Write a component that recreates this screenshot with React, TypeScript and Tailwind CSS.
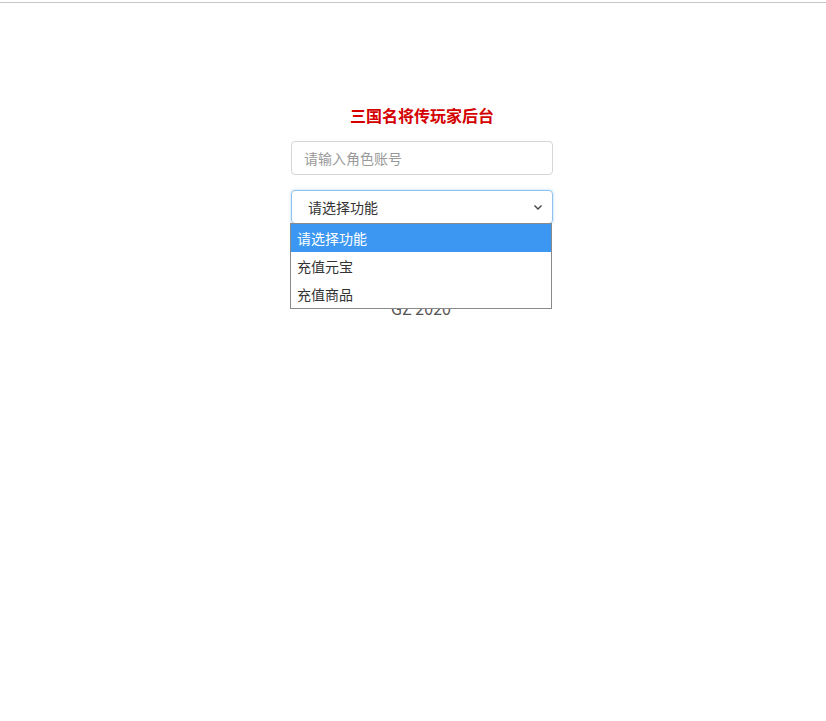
import React from "react";

export default function App() {
  const font = { fontFamily: '"Microsoft YaHei", "Noto Sans CJK SC", "Liberation Sans", sans-serif' };
  return (
    <div className="w-[826px] h-[721px] bg-white relative" style={font}>
      <div className="pt-[2px]">
        <div className="h-px bg-[#c8c8c8]" />
      </div>
      <div className="flex flex-col items-center pt-[100px] pl-[18px]">
        <div className="text-[16px] font-bold text-[#d40000] leading-[24px]">三国名将传玩家后台</div>
        <div className="mt-[14px] w-[262px] h-[34px] border border-[#d6d6d6] rounded-[4px] flex items-center pl-[12px] text-[14px] text-[#9a9a9a]">
          请输入角色账号
        </div>
        <div className="relative mt-[15px] w-[262px]">
          <div className="h-[34px] border border-[#8fc2f0] rounded-[4px] flex items-center pl-[16px] pr-[8px] text-[14px] text-[#333] shadow-[0_0_3px_rgba(102,175,233,0.5)]">
            <span className="flex-1">请选择功能</span>
            <svg width="10" height="10" viewBox="0 0 10 10" className="mr-[1px]">
              <path d="M1.5 3.5 L5 7 L8.5 3.5" fill="none" stroke="#444" strokeWidth="1.4" />
            </svg>
          </div>
          <div className="mt-[74px] text-center text-[16px] text-[#555] leading-[20px] pr-[2px]">GZ 2020</div>
          <div className="absolute left-[-1px] top-[33px] w-[262px] border border-[#8a8a8a] bg-white text-[14px]">
            <div className="h-[28px] bg-[#3c97f2] text-white flex items-center pl-[6px]">请选择功能</div>
            <div className="h-[28px] text-[#333] flex items-center pl-[6px]">充值元宝</div>
            <div className="h-[28px] text-[#333] flex items-center pl-[6px]">充值商品</div>
          </div>
        </div>
      </div>
    </div>
  );
}
